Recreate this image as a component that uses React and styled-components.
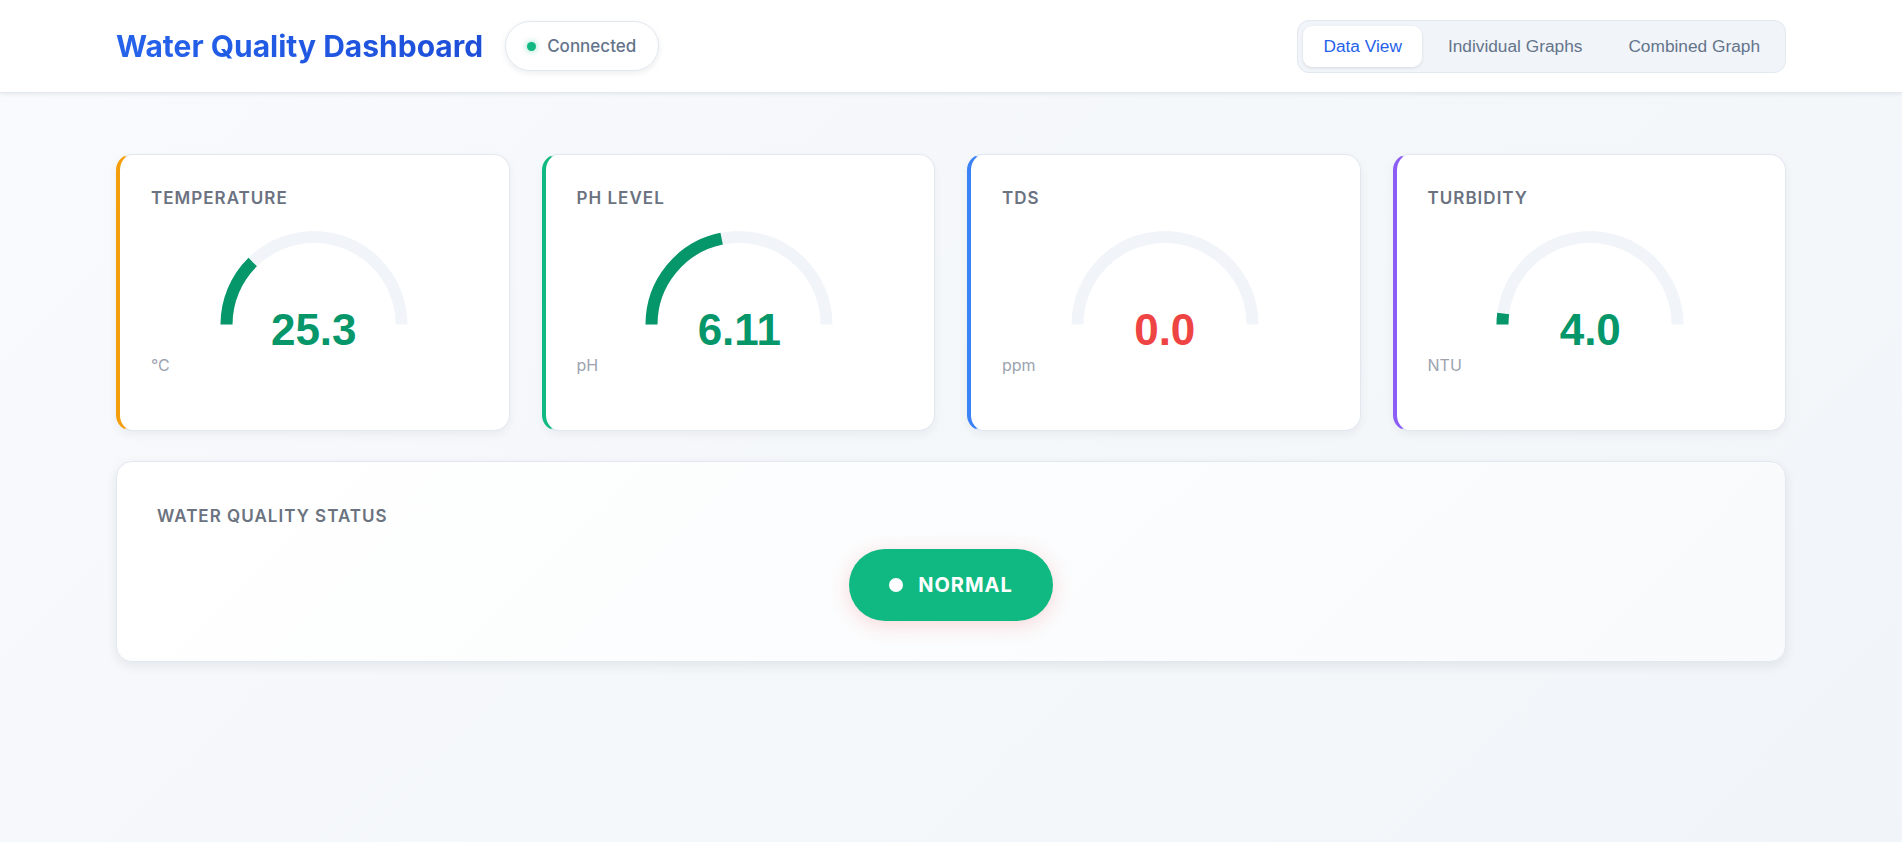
import React from 'react';
import styled, { createGlobalStyle } from 'styled-components';

const GlobalStyle = createGlobalStyle`
  * {
    box-sizing: border-box;
  }
  body {
    margin: 0;
    font-family: Inter, "Noto Sans", sans-serif;
    background: linear-gradient(135deg, #f8fafc 0%, #f1f5f9 100%);
    min-height: 100vh;
  }
`;

const Page = styled.div`
  min-height: 100vh;
`;

const Header = styled.header`
  background: #ffffff;
  border-bottom: 1px solid #e2e8f0;
  box-shadow: 0 1px 4px rgba(15, 23, 42, 0.08);
`;

const HeaderInner = styled.div`
  max-width: 1670px;
  margin: 0 auto;
  height: 92px;
  display: flex;
  align-items: center;
  justify-content: space-between;
`;

const Brand = styled.div`
  display: flex;
  align-items: center;
  gap: 22px;
`;

const Title = styled.h1`
  margin: 0;
  font-size: 30px;
  font-weight: 700;
  line-height: 1.2;
  background: linear-gradient(90deg, #2563eb 0%, #1d4ed8 100%);
  -webkit-background-clip: text;
  background-clip: text;
  color: transparent;
`;

const ConnPill = styled.div`
  display: flex;
  align-items: center;
  gap: 11px;
  height: 50px;
  padding: 0 22px 0 21px;
  border: 1px solid #e2e8f0;
  border-radius: 999px;
  background: #ffffff;
  box-shadow: 0 2px 6px rgba(15, 23, 42, 0.08);
  font-size: 17px;
  font-weight: 500;
  color: #64748b;
`;

const Dot = styled.span`
  width: ${(p) => p.size}px;
  height: ${(p) => p.size}px;
  border-radius: 50%;
  background: ${(p) => p.color};
  box-shadow: ${(p) => (p.glow ? '0 0 6px rgba(16, 185, 129, 0.5)' : 'none')};
`;

const Tabs = styled.nav`
  display: flex;
  gap: 6px;
  padding: 5px;
  background: #f1f5f9;
  border: 1px solid #e2e8f0;
  border-radius: 12px;
`;

const Tab = styled.button`
  height: 41px;
  padding: 0 20px;
  border: none;
  border-radius: 9px;
  font-family: "Liberation Sans", Arial, sans-serif;
  font-size: 17.3px;
  cursor: pointer;
  background: ${(p) => (p.active ? '#ffffff' : 'transparent')};
  color: ${(p) => (p.active ? '#2563eb' : '#64748b')};
  box-shadow: ${(p) => (p.active ? '0 1px 3px rgba(15, 23, 42, 0.12)' : 'none')};
`;

const Main = styled.main`
  max-width: 1670px;
  margin: 0 auto;
  padding-top: 61px;
`;

const Grid = styled.div`
  display: grid;
  grid-template-columns: repeat(4, 1fr);
  gap: 32px;
`;

const Card = styled.div`
  height: 277px;
  display: flex;
  flex-direction: column;
  padding: 31px 32px 0 31px;
  background: #ffffff;
  border: 1px solid #e2e8f0;
  border-left: 4px solid ${(p) => p.accent};
  border-radius: 16px;
  box-shadow: 0 4px 10px rgba(15, 23, 42, 0.05);
`;

const Label = styled.div`
  font-size: 17px;
  font-weight: 600;
  line-height: 25px;
  letter-spacing: 0.06em;
  text-transform: uppercase;
  color: #6b7280;
`;

const GaugeBox = styled.div`
  margin-top: 20px;
  display: flex;
  flex-direction: column;
  align-items: center;
`;

const Value = styled.div`
  margin-top: -17px;
  font-family: "Liberation Sans", Arial, sans-serif;
  font-size: 44px;
  font-weight: 700;
  line-height: 44px;
  color: ${(p) => p.color};
`;

const Unit = styled.div`
  margin-top: 1px;
  font-size: 16px;
  line-height: 24px;
  color: #9ca3af;
`;

const StatusCard = styled.section`
  margin-top: 30px;
  padding: 42px 40px 40px;
  background: linear-gradient(135deg, #ffffff 0%, #f8fafc 100%);
  border: 1px solid #e2e8f0;
  border-radius: 16px;
  box-shadow: 0 4px 12px rgba(15, 23, 42, 0.08);
  display: flex;
  flex-direction: column;
  align-items: center;
`;

const StatusLabel = styled(Label)`
  align-self: flex-start;
`;

const StatusPill = styled.div`
  margin-top: 20px;
  display: flex;
  align-items: center;
  gap: 15px;
  padding: 24px 40px;
  border-radius: 999px;
  background: #10b981;
  color: #ffffff;
  font-size: 20px;
  font-weight: 700;
  line-height: 24px;
  letter-spacing: 0.05em;
  box-shadow: 0 4px 20px rgba(239, 68, 68, 0.2);
`;

const R = 87.5;
const CX = 100;
const CY = 93.5;

function arcPath(p) {
  const a = Math.PI * (1 - p);
  const x = CX + R * Math.cos(a);
  const y = CY - R * Math.sin(a);
  return `M ${CX - R} ${CY} A ${R} ${R} 0 0 1 ${x.toFixed(2)} ${y.toFixed(2)}`;
}

function Gauge({ value, max }) {
  const p = Math.min(Math.max(value / max, 0), 1);
  return (
    <svg width="200" height="94" viewBox="0 0 200 94">
      <path d={arcPath(1)} fill="none" stroke="#f1f5f9" strokeWidth="12" />
      {p > 0 && <path d={arcPath(p)} fill="none" stroke="#059669" strokeWidth="12" />}
    </svg>
  );
}

const sensors = [
  { name: 'Temperature', value: 25.3, digits: 1, max: 100, unit: '°C', accent: '#f59e0b', color: '#059669' },
  { name: 'pH Level', value: 6.11, digits: 2, max: 14, unit: 'pH', accent: '#10b981', color: '#059669' },
  { name: 'TDS', value: 0, digits: 1, max: 1000, unit: 'ppm', accent: '#3b82f6', color: '#ef4444' },
  { name: 'Turbidity', value: 4.0, digits: 1, max: 100, unit: 'NTU', accent: '#8b5cf6', color: '#059669' },
];

export default function App() {
  return (
    <Page>
      <GlobalStyle />
      <Header>
        <HeaderInner>
          <Brand>
            <Title>Water Quality Dashboard</Title>
            <ConnPill>
              <Dot size={9} color="#10b981" glow />
              Connected
            </ConnPill>
          </Brand>
          <Tabs>
            <Tab active>Data View</Tab>
            <Tab>Individual Graphs</Tab>
            <Tab>Combined Graph</Tab>
          </Tabs>
        </HeaderInner>
      </Header>
      <Main>
        <Grid>
          {sensors.map((s) => (
            <Card key={s.name} accent={s.accent}>
              <Label>{s.name}</Label>
              <GaugeBox>
                <Gauge value={s.value} max={s.max} />
                <Value color={s.color}>{s.value.toFixed(s.digits)}</Value>
              </GaugeBox>
              <Unit>{s.unit}</Unit>
            </Card>
          ))}
        </Grid>
        <StatusCard>
          <StatusLabel>Water Quality Status</StatusLabel>
          <StatusPill>
            <Dot size={14} color="#ffffff" />
            NORMAL
          </StatusPill>
        </StatusCard>
      </Main>
    </Page>
  );
}
